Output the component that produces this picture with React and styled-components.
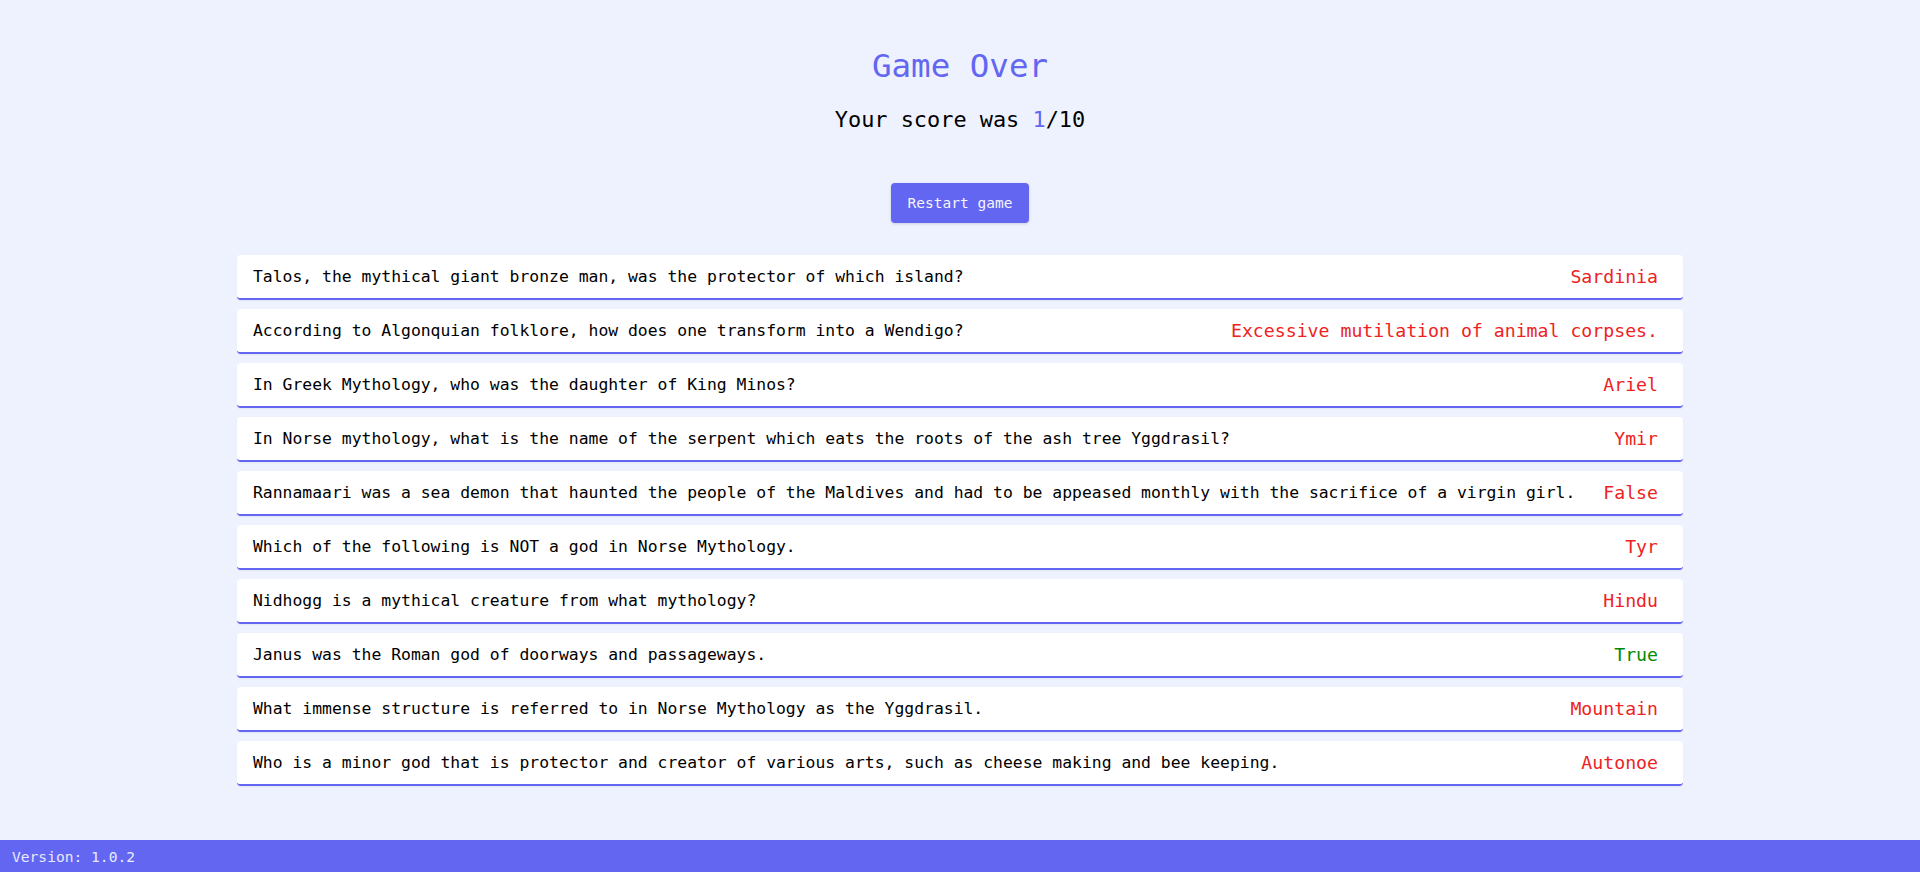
import React from "react";
import styled, { createGlobalStyle } from "styled-components";

const GlobalStyle = createGlobalStyle`
    html, body {
        margin: 0;
        padding: 0;
        background: #eef2ff;
        font-family: "DejaVu Sans Mono", "Liberation Mono", monospace;
    }
`;

const results = [
    { question: "Talos, the mythical giant bronze man, was the protector of which island?", answer: "Sardinia", correct: false },
    { question: "According to Algonquian folklore, how does one transform into a Wendigo?", answer: "Excessive mutilation of animal corpses.", correct: false },
    { question: "In Greek Mythology, who was the daughter of King Minos?", answer: "Ariel", correct: false },
    { question: "In Norse mythology, what is the name of the serpent which eats the roots of the ash tree Yggdrasil?", answer: "Ymir", correct: false },
    { question: "Rannamaari was a sea demon that haunted the people of the Maldives and had to be appeased monthly with the sacrifice of a virgin girl.", answer: "False", correct: false },
    { question: "Which of the following is NOT a god in Norse Mythology.", answer: "Tyr", correct: false },
    { question: "Nidhogg is a mythical creature from what mythology?", answer: "Hindu", correct: false },
    { question: "Janus was the Roman god of doorways and passageways.", answer: "True", correct: true },
    { question: "What immense structure is referred to in Norse Mythology as the Yggdrasil.", answer: "Mountain", correct: false },
    { question: "Who is a minor god that is protector and creator of various arts, such as cheese making and bee keeping.", answer: "Autonoe", correct: false },
];

const Page = styled.div`
    display: flex;
    flex-direction: column;
    min-height: 100vh;
`;

const Main = styled.main`
    flex: 1;
    display: flex;
    flex-direction: column;
    align-items: center;
    padding-top: 46px;
`;

const Title = styled.h1`
    margin: 0;
    font-size: 32.5px;
    font-weight: 400;
    line-height: 40px;
    color: #6366f1;
`;

const Score = styled.p`
    margin: 19px 0 0;
    font-size: 21.9px;
    line-height: 30px;
    color: #000;
`;

const Points = styled.span`
    color: #6366f1;
`;

const RestartButton = styled.button`
    margin-top: 48px;
    width: 138px;
    height: 40px;
    border: none;
    border-radius: 4px;
    background: #6366f1;
    color: #f5f5ff;
    font-family: inherit;
    font-size: 14.5px;
    box-shadow: 0 1px 3px rgba(0, 0, 0, 0.15);
    cursor: pointer;
`;

const List = styled.ul`
    list-style: none;
    margin: 32px 0 0;
    padding: 0;
    width: 1446px;
    display: flex;
    flex-direction: column;
    gap: 9px;
`;

const Row = styled.li`
    display: flex;
    align-items: center;
    justify-content: space-between;
    height: 43px;
    padding: 0 25px 0 16px;
    background: #fff;
    border-radius: 4px;
    border-bottom: 2px solid #6366f1;
    box-shadow: 0 1px 2px rgba(0, 0, 0, 0.05);
`;

const Question = styled.span`
    font-size: 16.4px;
    color: #000;
    white-space: nowrap;
`;

const Answer = styled.span`
    font-size: 18.2px;
    color: ${props => (props.correct ? "#008a00" : "#ee2222")};
    white-space: nowrap;
`;

const Footer = styled.footer`
    height: 32px;
    display: flex;
    align-items: center;
    padding-left: 12px;
    background: #6366f1;
    color: #e8eaff;
    font-size: 14.6px;
`;

const App = () => (
    <Page>
        <GlobalStyle />
        <Main>
            <Title>Game Over</Title>
            <Score>
                Your score was <Points>1</Points>/10
            </Score>
            <RestartButton>Restart game</RestartButton>
            <List>
                {results.map(item => (
                    <Row key={item.question}>
                        <Question>{item.question}</Question>
                        <Answer correct={item.correct}>{item.answer}</Answer>
                    </Row>
                ))}
            </List>
        </Main>
        <Footer>Version: 1.0.2</Footer>
    </Page>
);

export default App;
